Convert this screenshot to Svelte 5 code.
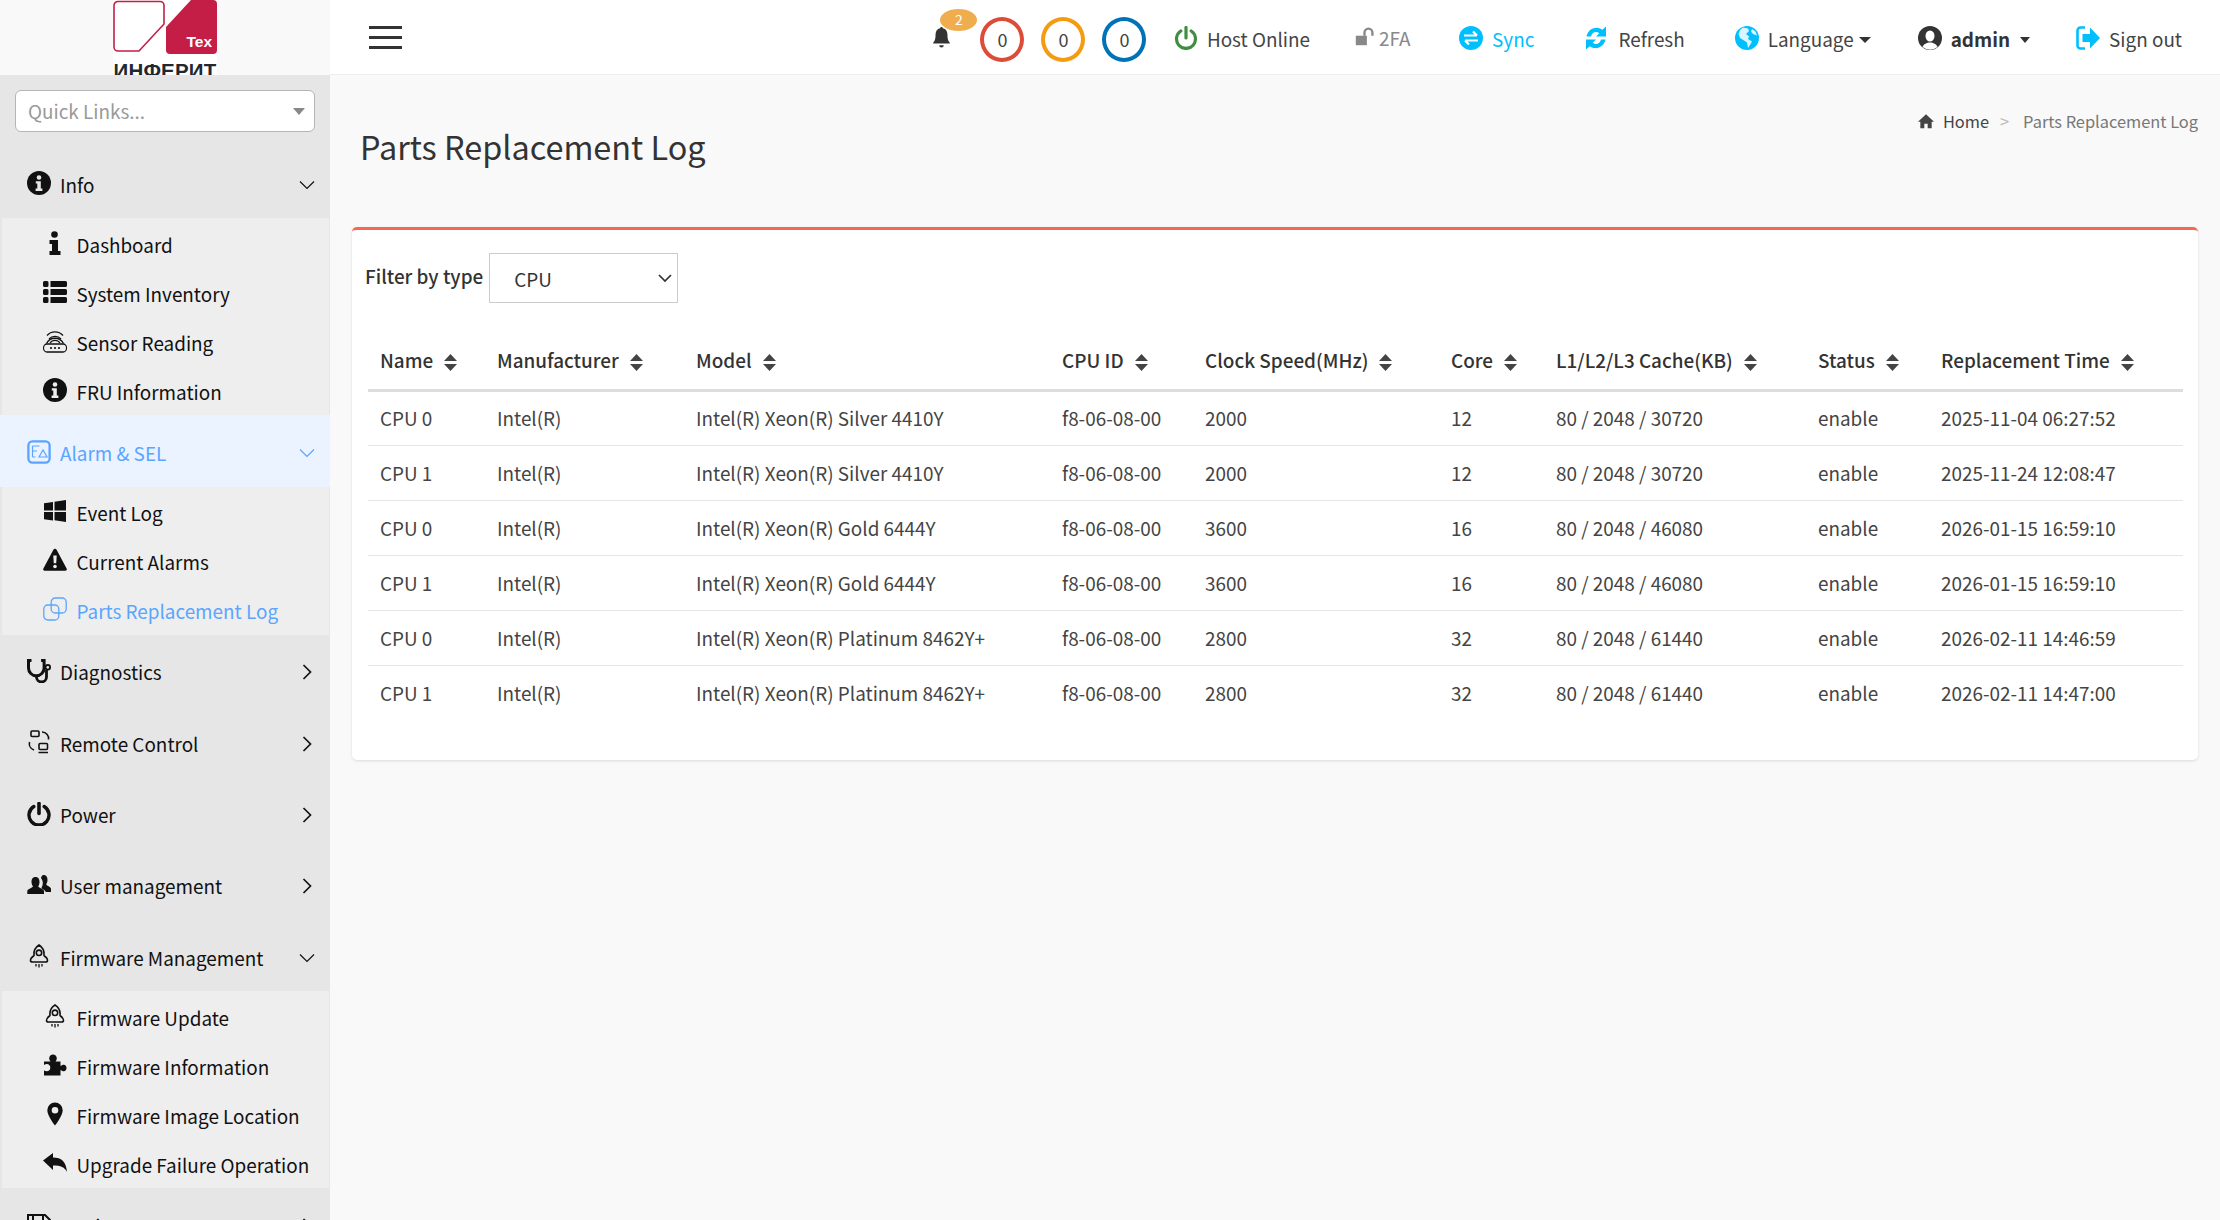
<script>
  const subInfo = [
    { label: 'Dashboard', icon: 'i' },
    { label: 'System Inventory', icon: 'list' },
    { label: 'Sensor Reading', icon: 'router' },
    { label: 'FRU Information', icon: 'info' }
  ];
  const subAlarm = [
    { label: 'Event Log', icon: 'win' },
    { label: 'Current Alarms', icon: 'warn' },
    { label: 'Parts Replacement Log', icon: 'copy', active: true }
  ];
  const subFirmware = [
    { label: 'Firmware Update', icon: 'rocket' },
    { label: 'Firmware Information', icon: 'puzzle' },
    { label: 'Firmware Image Location', icon: 'pin' },
    { label: 'Upgrade Failure Operation', icon: 'reply' }
  ];
  const menu = [
    { label: 'Info', icon: 'info', open: true, sub: subInfo },
    { label: 'Alarm & SEL', icon: 'alarm', open: true, active: true, sub: subAlarm },
    { label: 'Diagnostics', icon: 'steth' },
    { label: 'Remote Control', icon: 'remote' },
    { label: 'Power', icon: 'power' },
    { label: 'User management', icon: 'users' },
    { label: 'Firmware Management', icon: 'rocket', open: true, sub: subFirmware },
    { label: 'Settings', icon: 'disk' }
  ];
  const columns = ['Name', 'Manufacturer', 'Model', 'CPU ID', 'Clock Speed(MHz)', 'Core', 'L1/L2/L3 Cache(KB)', 'Status', 'Replacement Time'];
  const rows = [
    ['CPU 0', 'Intel(R)', 'Intel(R) Xeon(R) Silver 4410Y', 'f8-06-08-00', '2000', '12', '80 / 2048 / 30720', 'enable', '2025-11-04 06:27:52'],
    ['CPU 1', 'Intel(R)', 'Intel(R) Xeon(R) Silver 4410Y', 'f8-06-08-00', '2000', '12', '80 / 2048 / 30720', 'enable', '2025-11-24 12:08:47'],
    ['CPU 0', 'Intel(R)', 'Intel(R) Xeon(R) Gold 6444Y', 'f8-06-08-00', '3600', '16', '80 / 2048 / 46080', 'enable', '2026-01-15 16:59:10'],
    ['CPU 1', 'Intel(R)', 'Intel(R) Xeon(R) Gold 6444Y', 'f8-06-08-00', '3600', '16', '80 / 2048 / 46080', 'enable', '2026-01-15 16:59:10'],
    ['CPU 0', 'Intel(R)', 'Intel(R) Xeon(R) Platinum 8462Y+', 'f8-06-08-00', '2800', '32', '80 / 2048 / 61440', 'enable', '2026-02-11 14:46:59'],
    ['CPU 1', 'Intel(R)', 'Intel(R) Xeon(R) Platinum 8462Y+', 'f8-06-08-00', '2800', '32', '80 / 2048 / 61440', 'enable', '2026-02-11 14:47:00']
  ];
</script>

{#snippet icon(name)}
  <svg class="ico" viewBox="0 0 24 24" aria-hidden="true">
    {#if name === 'i'}
      <circle cx="11.500" cy="3.500" r="3.300" fill="currentColor" />
      <path d="M6.500 9h8.500v11h2.500v4h-11v-4h2.500v-7h-2.500z" fill="currentColor" />
    {:else if name === 'list'}
      <path d="M0 2.500a1.500 1.500 0 0 1 1.500-1.500h2.500a1.500 1.500 0 0 1 1.500 1.500v3a1.500 1.500 0 0 1-1.500 1.500h-2.500a1.500 1.500 0 0 1-1.500-1.500zM7.500 1h15a1.500 1.500 0 0 1 1.500 1.500v3a1.500 1.500 0 0 1-1.500 1.500h-15zM0 10.500a1.500 1.500 0 0 1 1.500-1.500h2.500a1.500 1.500 0 0 1 1.500 1.500v3a1.500 1.500 0 0 1-1.500 1.500h-2.500a1.500 1.500 0 0 1-1.500-1.500zM7.500 9h15a1.500 1.500 0 0 1 1.500 1.500v3a1.500 1.500 0 0 1-1.500 1.500h-15zM0 18.500a1.500 1.500 0 0 1 1.500-1.500h2.500a1.500 1.500 0 0 1 1.500 1.500v3a1.500 1.500 0 0 1-1.500 1.500h-2.500a1.500 1.500 0 0 1-1.500-1.500zM7.500 17h15a1.500 1.500 0 0 1 1.500 1.500v3a1.500 1.500 0 0 1-1.500 1.500h-15z" fill="currentColor" />
    {:else if name === 'router'}
      <g fill="none" stroke="currentColor" stroke-width="1.300">
        <rect x=".6" y="15" width="26.800" height="8" rx="4" transform="scale(.86 1)" />
        <path d="M3.500 14.500a9.500 9.500 0 0 1 17 0" />
        <path d="M7 14a6 6 0 0 1 10 0" />
        <path d="M4 6.500a10.500 10.500 0 0 1 16 0" />
        <path d="M6 10a8 8 0 0 1 12 0" />
      </g>
      <circle cx="8" cy="19" r="1.100" fill="currentColor" /><circle cx="12" cy="19" r="1.100" fill="currentColor" /><circle cx="16" cy="19" r="1.100" fill="currentColor" />
    {:else if name === 'info'}
      <circle cx="12" cy="12" r="12" fill="currentColor" />
      <circle cx="12" cy="6.500" r="2.300" fill="var(--ico-bg, #eee)" />
      <path d="M8.800 10.300h5v7.300h1.600v2.300h-6.800v-2.300h1.700v-5h-1.500z" fill="var(--ico-bg, #eee)" />
    {:else if name === 'alarm'}
      <rect x="1.400" y="1.400" width="21.200" height="21.200" rx="4" fill="none" stroke="currentColor" stroke-width="2.300" />
      <path d="M5.500 6h7M5.500 6v11M5.500 11h4.500M5.500 17h3M12 17l4-7 4 7z" fill="none" stroke="currentColor" stroke-width="1.200" />
    {:else if name === 'win'}
      <path d="M1 4.300l9-1.300v8.500h-9zM11.500 2.700l11.500-1.700v10.500h-11.500zM1 13h9v8.500l-9-1.300zM11.500 13h11.500v10l-11.500-1.700z" fill="currentColor" />
    {:else if name === 'warn'}
      <path d="M12 .8a1.800 1.800 0 0 1 1.600 1l10 18.700a1.500 1.500 0 0 1-1.400 2.300h-20.400a1.500 1.500 0 0 1-1.400-2.300l10-18.700a1.800 1.800 0 0 1 1.600-1z" fill="currentColor" />
      <path d="M10.300 7.500h3.400l-.5 7.800h-2.400z" fill="#eee" /><circle cx="12" cy="18.500" r="1.800" fill="#eee" />
    {:else if name === 'copy'}
      <g fill="none" stroke="currentColor" stroke-width="1.300">
        <rect x=".8" y="8" width="15" height="15" rx="4" />
        <rect x="8.200" y="1" width="15" height="15" rx="4" />
      </g>
    {:else if name === 'steth'}
      <path d="M4.500 1.500h-3v7.500a7.800 7.800 0 0 0 15.600 0v-7.500h-3" fill="none" stroke="currentColor" stroke-width="3" />
      <path d="M9.500 16.500v1.500a5 5 0 0 0 10 0v-7" fill="none" stroke="currentColor" stroke-width="2.800" />
      <circle cx="20.800" cy="8.300" r="2.300" fill="none" stroke="currentColor" stroke-width="1.800" />
    {:else if name === 'remote'}
      <g fill="none" stroke="currentColor" stroke-width="1.600">
        <rect x="4" y="1" width="8" height="5.500" rx="1" />
        <rect x="12" y="13.500" width="8.500" height="6" rx="1" />
        <path d="M11.500 22.500h9.500M15 2a6.500 6.500 0 0 1 6.500 7.500M2.500 12a7 7 0 0 0 4.500 8" />
      </g>
    {:else if name === 'power'}
      <path d="M6.800 4.500a10 10 0 1 0 10.400 0" fill="none" stroke="currentColor" stroke-width="3.400" stroke-linecap="round" />
      <path d="M12 1.500v10" stroke="currentColor" stroke-width="3.600" stroke-linecap="round" />
    {:else if name === 'users'}
      <path d="M8.500 4c3 0 4 2.300 4 5 0 2-.8 3.500-1.300 4.600.9 1.600 5 2 5.800 4.400v3h-16.700v-3c.7-2.400 4.800-2.800 5.700-4.400-.5-1.100-1.500-2.600-1.500-4.600 0-2.700 1-5 4-5z" fill="currentColor" />
      <path d="M16.500 2c3 0 4 2.300 4 5 0 2-.8 3.300-1.300 4.400.9 1.600 4 1.800 4.800 4.200v3.400h-5.200c-.6-2-3.200-3-4.500-3.800.7-1.500 1.500-2.800 1.500-5.200 0-2-.5-3.500-1.800-4.800.4-1.600 1-3.200 2.500-3.200z" fill="currentColor" />
    {:else if name === 'rocket'}
      <g fill="none" stroke="currentColor" stroke-width="1.600">
        <path d="M12 1c4 2.500 5.500 6.500 5 10.500 2 1.500 3.500 3 3.500 5 0 1-.8 1.500-2 1.500h-13c-1.200 0-2-.5-2-1.500 0-2 1.500-3.500 3.500-5-.5-4 1-8 5-10.500z" />
        <circle cx="12" cy="8.800" r="2.700" />
        <path d="M9 20v2.500M12 20v3.500M15 20v2.500" stroke-width="1.300" />
      </g>
    {:else if name === 'puzzle'}
      <path d="M1 8.500h6.500c-1-1.500-1.300-2.300-1.300-3.300 0-2 1.800-3.700 3.800-3.700s3.800 1.700 3.800 3.700c0 1-.4 2-1.300 3.300h5v4.500c1.500-1 2.300-1.300 3.300-1.300 1.700 0 2.700 1.500 2.700 3.300s-1 3.300-2.700 3.300c-1 0-1.800-.3-3.300-1.300v5.500h-16.500v-5c1 .5 1.800.8 2.800.8 2 0 3.500-1.500 3.500-3.600s-1.500-3.700-3.500-3.700c-1 0-1.800.4-2.800 1z" fill="currentColor" />
    {:else if name === 'pin'}
      <path fill-rule="evenodd" d="M12 .5a7.700 7.700 0 0 1 7.700 7.700c0 5.500-7.700 15.300-7.700 15.300s-7.700-9.800-7.700-15.300a7.700 7.700 0 0 1 7.700-7.700zm0 4.500a3.300 3.300 0 1 0 0 6.600 3.300 3.300 0 0 0 0-6.600z" fill="currentColor" />
    {:else if name === 'reply'}
      <path d="M0 9.500l10-7.500v4.500c8.500 0 13 4 14 14.500-2.500-5-6-6.500-14-6.500v4.500z" fill="currentColor" />
    {:else if name === 'disk'}
      <path d="M1 2h17l5 5v15h-22zM6 2v7h10v-7" fill="none" stroke="currentColor" stroke-width="2" />
    {/if}
  </svg>
{/snippet}

{#snippet chevron(open)}
  <svg class="chev" viewBox="0 0 16 16" aria-hidden="true">
    {#if open}
      <path d="M1 4.500l7 7 7-7" fill="none" stroke="currentColor" stroke-width="1.200" />
    {:else}
      <path d="M4.500 1l7 7-7 7" fill="none" stroke="currentColor" stroke-width="1.700" />
    {/if}
  </svg>
{/snippet}

<div class="page">
  <aside class="sidebar">
    <div class="logo">
      <div class="logo-inner">
        <svg class="mark" viewBox="0 0 104 54" aria-hidden="true">
          <path d="M5 1.500h42a4 4 0 0 1 4 4v18.500l-25 27h-21a4 4 0 0 1-4-4v-41.500a4 4 0 0 1 4-4z" fill="#fff" stroke="#c41e47" stroke-width="1.600" />
          <path d="M53 27l25-27h22a4 4 0 0 1 4 4v46a4 4 0 0 1-4 4h-43a4 4 0 0 1-4-4z" fill="#c41e47" />
        </svg>
        <span class="tex">Tex</span>
        <span class="brand">ИНФЕРИТ</span>
      </div>
    </div>
    <div class="nav">
      <div class="quick">
        <span>Quick Links...</span>
        <i class="quick-caret"></i>
      </div>
      {#each menu as item}
        <div class="item" class:active={item.active}>
          {@render icon(item.icon)}
          <span>{item.label}</span>
          {@render chevron(item.open)}
        </div>
        {#if item.sub}
          <div class="sub">
            {#each item.sub as s}
              <div class="sub-item" class:active={s.active}>
                <span class="sub-ico">{@render icon(s.icon)}</span>
                <span>{s.label}</span>
              </div>
            {/each}
          </div>
        {/if}
      {/each}
    </div>
  </aside>

  <div class="main">
    <header class="topbar">
      <div class="burger"><i></i><i></i><i></i></div>
      <div class="tools">
        <div class="bell">
          <svg viewBox="0 0 20 24" aria-hidden="true">
            <path d="M10 1c1 0 1.500.7 1.500 1.500 3.500.8 5 3.500 5 7 0 5 1 7 2.500 8.500v1h-18v-1c1.500-1.500 2.500-3.500 2.500-8.500 0-3.500 1.500-6.200 5-7 0-.8.500-1.500 1.500-1.500zM7.500 21h5a2.500 2.500 0 0 1-5 0z" fill="#333" />
          </svg>
          <b class="badge">2</b>
        </div>
        <span class="ring red">0</span>
        <span class="ring orange">0</span>
        <span class="ring blue">0</span>
        <div class="tool host">
          <svg viewBox="0 0 24 24" aria-hidden="true"><path d="M6.800 5a9.500 9.500 0 1 0 10.400 0" fill="none" stroke="#3e8e41" stroke-width="3.200" stroke-linecap="round" /><path d="M12 1.500v10.500" stroke="#3e8e41" stroke-width="3.200" stroke-linecap="round" /></svg>
          <span>Host Online</span>
        </div>
        <div class="tool twofa">
          <svg viewBox="0 0 24 24" aria-hidden="true"><path d="M1 11h14v12h-14z" fill="#888" /><path d="M12 11v-4a5 5 0 0 1 10 0v4" fill="none" stroke="#888" stroke-width="3" /></svg>
          <span>2FA</span>
        </div>
        <div class="tool sync">
          <svg viewBox="0 0 24 24" aria-hidden="true"><circle cx="12" cy="12" r="12" fill="#00bfff" /><path d="M5 9.500h13M14 5.500l4 4M19 14.500h-13M10 18.500l-4-4" fill="none" stroke="#fff" stroke-width="2.200" /></svg>
          <span>Sync</span>
        </div>
        <div class="tool refresh">
          <svg viewBox="0 0 24 24" aria-hidden="true"><path d="M2.500 10.500c1-5 5.500-9.500 12-8.500 1.500.3 2.800 1 3.800 1.800l3.700-3.300v10h-10l3.300-3.300c-3-2.200-7-1.500-8.300 3.300zM21.500 13.500c-1 5-5.500 9.500-12 8.500-1.500-.3-2.800-1-3.800-1.800l-3.700 3.300v-10h10l-3.300 3.300c3 2.200 7 1.500 8.300-3.300z" fill="#00bfff" /></svg>
          <span>Refresh</span>
        </div>
        <div class="tool lang">
          <svg viewBox="0 0 24 24" aria-hidden="true"><circle cx="12" cy="12" r="12" fill="#00bfff" /><path d="M8 1.500l5 1 1 2.500-3 3 3 2.500-1 2.500 4 2.500-2 3.500-2 3-1-5.500-3-2-4-2.500-1.500-4.500 2-4zM17 3l3.500 2.500 1.500 4-4-1.500-2-2.500z" fill="#d9f5ff" /></svg>
          <span>Language</span><i class="caret"></i>
        </div>
        <div class="tool admin">
          <svg viewBox="0 0 24 24" aria-hidden="true"><circle cx="12" cy="12" r="12" fill="#333" /><ellipse cx="12" cy="10" rx="4.500" ry="5.500" fill="#fff" /><path d="M4.500 21c1-3 4.500-4.500 7.500-4.500s6.500 1.500 7.500 4.500a12 12 0 0 1-15 0z" fill="#fff" /></svg>
          <strong>admin</strong><i class="caret wide"></i>
        </div>
        <div class="tool signout">
          <svg viewBox="0 0 24 24" aria-hidden="true"><path d="M9 1.500h-4.500a3 3 0 0 0-3 3v15a3 3 0 0 0 3 3h4.500" fill="none" stroke="#00bfff" stroke-width="2.600" /><path d="M6.500 8h7.500v-6.500l10 10.500-10 10.500v-6.500h-7.500z" fill="#00bfff" /></svg>
          <span>Sign out</span>
        </div>
      </div>
    </header>

    <main class="content">
      <div class="title-row">
        <h1>Parts Replacement Log</h1>
        <nav class="crumbs">
          <svg viewBox="0 0 24 24" aria-hidden="true"><path d="M12 2l12 11h-3.500v10h-6v-7h-5v7h-6v-10h-3.500z" fill="#444" /></svg>
          <span class="home">Home</span><span class="sep">&gt;</span><span class="here">Parts Replacement Log</span>
        </nav>
      </div>

      <section class="card">
        <div class="filter">
          <label for="type">Filter by type</label>
          <div class="select-wrap">
            <select id="type"><option>CPU</option></select>
            <svg viewBox="0 0 14 14" aria-hidden="true"><path d="M1 4l6 6 6-6" fill="none" stroke="#333" stroke-width="1.700" /></svg>
          </div>
        </div>
        <table>
          <thead>
            <tr>
              {#each columns as c}
                <th>
                  {c}<svg class="sort" viewBox="0 0 10 16" preserveAspectRatio="none" aria-hidden="true"><path d="M5 0l5 6.500h-10zM5 16l-5-6.500h10z" fill="#444" /></svg>
                </th>
              {/each}
            </tr>
          </thead>
          <tbody>
            {#each rows as r}
              <tr>
                {#each r as v}<td>{v}</td>{/each}
              </tr>
            {/each}
          </tbody>
        </table>
      </section>
    </main>
  </div>
</div>

<style>
  :global(body) {
    margin: 0;
    background: #f9f9f9;
    font-family: "Noto Sans CJK SC", "Noto Sans", sans-serif;
  }
  .page { display: flex; width: 2220px; height: 1220px; overflow: hidden; }

  /* sidebar */
  .sidebar { width: 330px; flex: none; display: flex; flex-direction: column; }
  .logo { height: 75px; background: #f9f9f9; display: flex; justify-content: center; overflow: hidden; flex: none; }
  .logo-inner { position: relative; width: 104px; height: 75px; background: #fff; overflow: hidden; }
  .mark { position: absolute; left: 0; top: 0; width: 104px; height: 54px; }
  .tex { position: absolute; right: 5px; top: 32px; font: 700 15.500px/20px "Liberation Sans", sans-serif; color: #fff; }
  .brand { position: absolute; left: 0; width: 104px; text-align: center; top: 61px; font: 700 20.500px/20px "Liberation Sans", sans-serif; letter-spacing: .2px; color: #1f2933; white-space: nowrap; }
  .nav { flex: 1; background: #e6e6e6; overflow: hidden; }
  .quick { margin: 15px; height: 42px; box-sizing: border-box; background: #fff; border: 1px solid #b5b5b5; border-radius: 6px; display: flex; align-items: center; justify-content: space-between; padding: 0 9px 0 12px; color: #999; font-size: 18.900px; line-height: 26px; }
  .quick-caret { width: 0; height: 0; border: 6px solid transparent; border-top: 7px solid #888; border-bottom: 0; }
  .item { height: 71.400px; display: flex; align-items: center; padding: 4px 15px 0 27px; box-sizing: border-box; gap: 9px; font-size: 18.900px; line-height: 26px; color: #111; --ico-bg: #e6e6e6; }
  .item > :global(.ico) { width: 24px; height: 24px; margin-top: -3px; }
  .item > span { flex: 1; }
  .chev { width: 16px; height: 16px; }
  .item.active { background: #eaf3ff; color: #5aa5ff; }
  .sub { margin: 0 1px 0 2px; background: #eee; }
  .sub-item { height: 49.250px; display: flex; align-items: center; font-size: 18.900px; line-height: 26px; color: #111; padding: 3px 0 0 41px; box-sizing: border-box; gap: 9.500px; }
  .sub-ico { width: 24px; display: flex; justify-content: center; flex: none; margin-top: -4px; }
  .sub-ico :global(.ico) { width: 24px; height: 24px; }
  .sub-item.active { color: #5aa5ff; }

  /* top bar */
  .main { flex: 1; min-width: 0; display: flex; flex-direction: column; }
  .topbar { height: 75px; box-sizing: border-box; background: #fff; border-bottom: 1px solid #eee; display: flex; align-items: center; justify-content: space-between; padding: 0 38px 0 39px; flex: none; }
  .burger { display: flex; flex-direction: column; gap: 7px; width: 33px; }
  .burger i { height: 3px; background: #333; display: block; }
  .tools { display: flex; align-items: center; padding-top: 4px; font-size: 18.900px; line-height: 26px; color: #444; }
  .bell { position: relative; width: 19px; height: 22px; margin-right: 29px; margin-top: -4px; }
  .bell svg { width: 19px; height: 22px; display: block; }
  .badge { position: absolute; left: 8px; top: -17px; width: 37px; height: 22px; border-radius: 50%; background: #f0ad4e; color: #fff; font-size: 14px; font-weight: 400; line-height: 21px; text-align: center; }
  .ring { width: 44px; height: 45px; box-sizing: border-box; border: 4px solid; border-radius: 50%; display: flex; align-items: center; justify-content: center; font-size: 18px; margin-right: 17px; }
  .ring.red { border-color: #dd4b39; }
  .ring.orange { border-color: #f39c12; }
  .ring.blue { border-color: #0073b7; margin-right: 27.500px; }
  .tool { display: flex; align-items: center; gap: 9px; margin-right: 50px; }
  .tool svg { width: 24px; height: 24px; flex: none; margin-top: -3px; }
  .host { margin-right: 45px; }
  .twofa { color: #888; gap: 5px; margin-top: -2px; margin-right: 48.500px; }
  .twofa svg { width: 19px; height: 19px; }
  .sync { color: #00bfff; }
  .refresh { gap: 10px; }
  .lang { margin-right: 47px; }
  .admin { color: #333; margin-right: 46px; }
  .signout { margin-right: 0; }
  .caret { width: 0; height: 0; border: 6px solid transparent; border-top: 6px solid #333; border-bottom: 0; margin-left: -4px; margin-top: 2px; }
  .caret.wide { margin-left: 1px; border-width: 5px; border-top-width: 6px; border-bottom: 0; }

  /* content */
  .content { flex: 1; padding: 0 22px; min-height: 0; }
  .title-row { height: 152px; position: relative; }
  h1 { margin: 0; padding: 47px 0 0 8px; font-size: 32.400px; line-height: 48px; font-weight: 400; color: #333; }
  .crumbs { position: absolute; right: 0; top: 33.500px; display: flex; align-items: center; font-size: 16.400px; line-height: 24px; color: #444; }
  .crumbs svg { width: 16px; height: 16px; margin-right: 9px; }
  .sep { color: #bbb; margin: 0 14px 0 11px; }
  .here { color: #777; }

  .card { background: #fff; border-top: 3px solid #f56954; border-radius: 5px; box-shadow: 0 1px 3px rgba(0, 0, 0, .12); padding: 23px 15px 40px 16px; }
  .filter { display: flex; align-items: center; gap: 6px; height: 50px; margin-left: -3px; }
  .filter label { font-size: 18.900px; font-weight: 500; line-height: 26px; color: #333; margin-top: -4px; }
  .select-wrap { position: relative; }
  .select-wrap svg { position: absolute; right: 6px; top: 18px; width: 14px; height: 14px; }
  select { appearance: none; display: block; width: 189px; height: 50px; box-sizing: border-box; border: 1px solid #ccc; background: #fff; color: #333; font: 18.900px "Noto Sans CJK SC", sans-serif; padding: 0 24px; border-radius: 0; margin: 0; }
  table { width: 100%; border-collapse: collapse; margin-top: 34px; table-layout: fixed; font-size: 18.900px; line-height: 26px; color: #444; }
  th { height: 53px; text-align: left; padding: 0 12px 5px; font-weight: 500; color: #333; border-bottom: 3px solid #ddd; white-space: nowrap; box-sizing: border-box; }
  td { height: 55px; padding: 0 12px; border-bottom: 1px solid #e6e6e6; white-space: nowrap; box-sizing: border-box; }
  tbody tr:last-child td { border-bottom: 0; }
  th:nth-child(1) { width: 117px; }
  th:nth-child(2) { width: 199px; }
  th:nth-child(3) { width: 366px; }
  th:nth-child(4) { width: 143px; }
  th:nth-child(5) { width: 246px; }
  th:nth-child(6) { width: 105px; }
  th:nth-child(7) { width: 262px; }
  th:nth-child(8) { width: 123px; }
  .sort { width: 13px; height: 17px; margin-left: 11px; vertical-align: -3px; }
</style>
